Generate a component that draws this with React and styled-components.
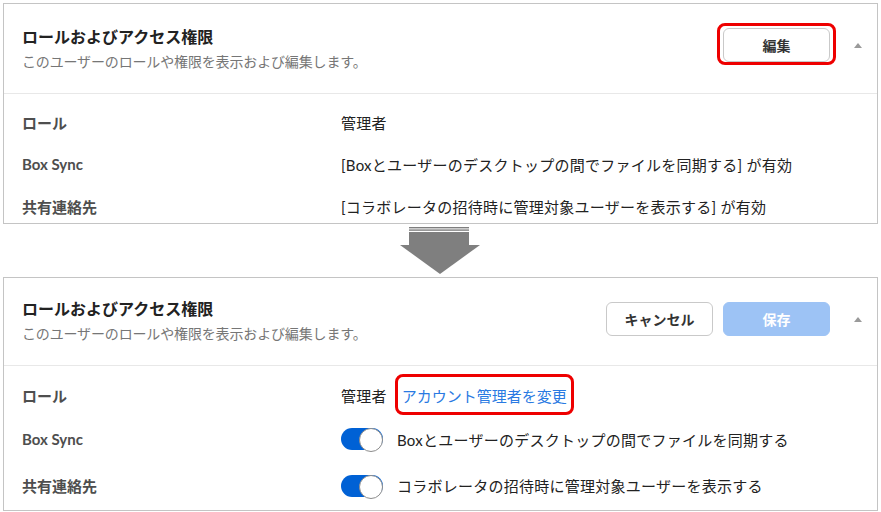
import React from "react";
import styled, { createGlobalStyle } from "styled-components";

const Global = createGlobalStyle`
  html, body { margin: 0; padding: 0; background: #fff; }
  body {
    font-family: Lato, "Noto Sans CJK JP", "Noto Sans", sans-serif;
    color: #222;
    -webkit-font-smoothing: antialiased;
  }
  * { box-sizing: border-box; }
`;

const Page = styled.div`
  width: 881px;
  padding: 3px 4px 0 3px;
  display: flex;
  flex-direction: column;
`;

const Panel = styled.section`
  width: 875px;
  height: ${(p) => p.$h}px;
  border: 1px solid #c4c4c4;
  background: #fff;
  overflow: hidden;
  display: flex;
  flex-direction: column;
`;

const Header = styled.header`
  height: ${(p) => p.$h}px;
  flex: none;
  border-bottom: 1px solid #e8e8e8;
  display: flex;
  align-items: flex-start;
  justify-content: space-between;
  padding: 0 15px 0 18px;
`;

const TitleBlock = styled.div`
  padding-top: ${(p) => p.$top}px;
  display: flex;
  flex-direction: column;
  gap: 5px;
`;

const Title = styled.h2`
  margin: 0;
  font-size: 16px;
  line-height: 20px;
  font-weight: 700;
  color: #222;
`;

const Subtitle = styled.p`
  margin: 0;
  font-size: 14px;
  line-height: 20px;
  letter-spacing: -0.15px;
  color: #767676;
`;

const Actions = styled.div`
  padding-top: 24px;
  display: flex;
  align-items: center;
  gap: 10px;
`;

const Button = styled.button`
  width: 107px;
  height: 34px;
  border-radius: 6px;
  font-family: inherit;
  font-size: 14px;
  font-weight: 700;
  cursor: pointer;
  border: 1px solid ${(p) => (p.$primary ? "#9dc3f5" : "#c9c9c9")};
  background: ${(p) => (p.$primary ? "#9dc3f5" : "#fff")};
  color: ${(p) => (p.$primary ? "#fff" : "#333")};
`;

const Annotated = styled.span`
  position: relative;
  display: inline-flex;
  margin-left: ${(p) => p.$gap || 0}px;
  &::after {
    content: "";
    position: absolute;
    inset: ${(p) => p.$inset};
    border: 3px solid #ee0000;
    border-radius: 8px;
    pointer-events: none;
  }
`;

const Caret = styled.span`
  width: 0;
  height: 0;
  margin-left: 14px;
  border-left: 4px solid transparent;
  border-right: 4px solid transparent;
  border-bottom: 5px solid #9a9a9a;
`;

const Body = styled.div`
  padding: ${(p) => p.$top}px 0 0 18px;
  display: flex;
  flex-direction: column;
`;

const Row = styled.div`
  display: grid;
  grid-template-columns: 319px 1fr;
  align-items: center;
  height: ${(p) => p.$h || 42}px;
`;

const Label = styled.div`
  font-size: 15px;
  font-weight: 700;
  color: #4e4e4e;
`;

const Value = styled.div`
  display: flex;
  align-items: center;
  font-size: 15px;
  letter-spacing: 0.25px;
  color: #222;
  white-space: nowrap;
`;

const Link = styled.a`
  color: #2a7ae2;
  text-decoration: none;
  letter-spacing: 0;
  cursor: pointer;
`;

const Toggle = styled.span`
  position: relative;
  width: 42px;
  height: 22px;
  border-radius: 11px;
  background: #0061d5;
  margin-right: 14px;
  flex: none;
  &::after {
    content: "";
    position: absolute;
    top: 0;
    right: 0;
    width: 22px;
    height: 22px;
    border-radius: 50%;
    background: #fff;
    border: 1px solid #8c8c8c;
  }
`;

const ArrowRow = styled.div`
  display: flex;
  justify-content: center;
  padding: 2px 0 3px;
`;

const DownArrow = () => (
  <svg width="80" height="48" viewBox="0 0 80 48" aria-hidden="true">
    <rect x="9" y="1" width="60" height="1.4" fill="#7f7f7f" />
    <rect x="9" y="3.4" width="60" height="1.4" fill="#7f7f7f" />
    <rect x="9" y="6" width="60" height="14" fill="#7f7f7f" />
    <polygon points="0,19 80,19 40,48" fill="#7f7f7f" />
  </svg>
);

const PanelHeader = ({ h, top, children }) => (
  <Header $h={h}>
    <TitleBlock $top={top}>
      <Title>ロールおよびアクセス権限</Title>
      <Subtitle>このユーザーのロールや権限を表示および編集します。</Subtitle>
    </TitleBlock>
    <Actions>
      {children}
      <Caret />
    </Actions>
  </Header>
);

export default function App() {
  return (
    <>
      <Global />
      <Page>
        <Panel $h={221}>
          <PanelHeader h={90} top={23}>
            <Annotated $inset="-5px -6px -3px -6px">
              <Button>編集</Button>
            </Annotated>
          </PanelHeader>
          <Body $top={7}>
            <Row>
              <Label>ロール</Label>
              <Value>管理者</Value>
            </Row>
            <Row>
              <Label>Box Sync</Label>
              <Value>[Boxとユーザーのデスクトップの間でファイルを同期する] が有効</Value>
            </Row>
            <Row>
              <Label>共有連絡先</Label>
              <Value>[コラボレータの招待時に管理対象ユーザーを表示する] が有効</Value>
            </Row>
          </Body>
        </Panel>

        <ArrowRow>
          <DownArrow />
        </ArrowRow>

        <Panel $h={234}>
          <PanelHeader h={88} top={21}>
            <Button>キャンセル</Button>
            <Button $primary>保存</Button>
          </PanelHeader>
          <Body $top={8}>
            <Row>
              <Label>ロール</Label>
              <Value>
                管理者
                <Annotated $gap={15} $inset="-11px -7px -9px -7px">
                  <Link>アカウント管理者を変更</Link>
                </Annotated>
              </Value>
            </Row>
            <Row $h={46}>
              <Label>Box Sync</Label>
              <Value>
                <Toggle />
                Boxとユーザーのデスクトップの間でファイルを同期する
              </Value>
            </Row>
            <Row $h={47}>
              <Label>共有連絡先</Label>
              <Value>
                <Toggle />
                コラボレータの招待時に管理対象ユーザーを表示する
              </Value>
            </Row>
          </Body>
        </Panel>
      </Page>
    </>
  );
}
